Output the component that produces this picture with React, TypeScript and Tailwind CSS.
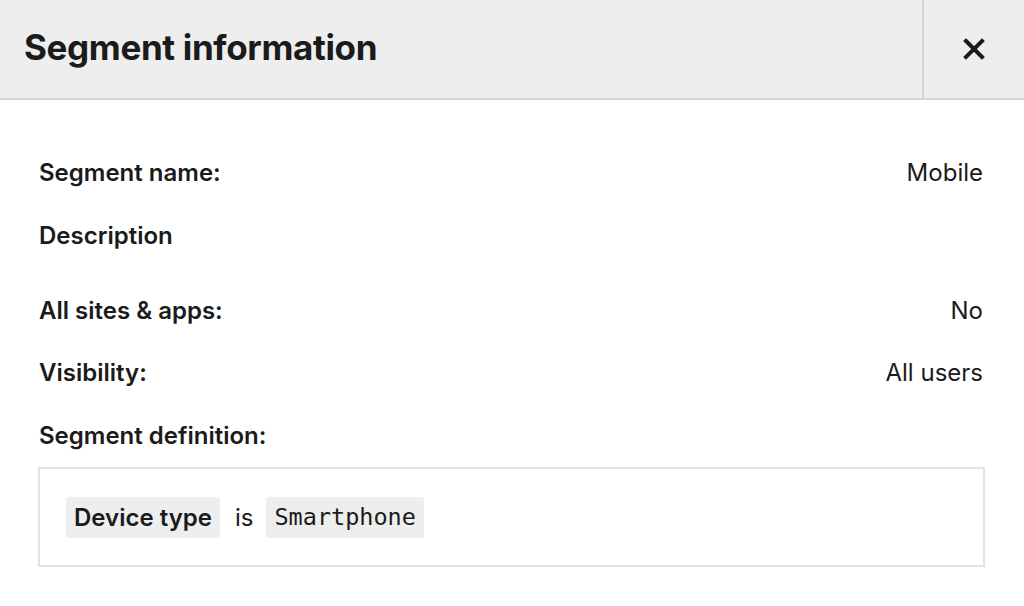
export default function App() {
  const rows: { label: string; value?: string; gap: string }[] = [
    { label: 'Segment name:', value: 'Mobile', gap: 'mt-[58px]' },
    { label: 'Description', gap: 'mt-[34px]' },
    { label: 'All sites & apps:', value: 'No', gap: 'mt-[46px]' },
    { label: 'Visibility:', value: 'All users', gap: 'mt-[33px]' },
    { label: 'Segment definition:', gap: 'mt-[34px]' },
  ];

  return (
    <div className="h-[606px] w-[1024px] bg-white text-[#1b1b1b]" style={{ fontFamily: 'Inter, "Noto Sans", sans-serif' }}>
      <div className="flex h-[100px] border-b-2 border-[#d6d6d6] bg-[#eeeeee]">
        <h2 className="flex flex-1 items-center pb-[3px] pl-6 text-[35px] font-bold tracking-[-0.35px]">Segment information</h2>
        <button className="flex w-[102px] items-center justify-center border-l-2 border-[#d6d6d6]">
          <svg width="22" height="22" viewBox="0 0 22 22" fill="none" stroke="#1b1b1b" strokeWidth="4" strokeLinecap="square">
            <path d="M3 3L19 19M19 3L3 19" />
          </svg>
        </button>
      </div>

      <div className="px-[38px]">
        {rows.map((r) => (
          <div key={r.label} className={`flex h-[29px] items-center justify-between pl-px text-[24px] leading-[29px] ${r.gap}`}>
            <span className="font-semibold">{r.label}</span>
            {r.value && <span className="mr-[3px]">{r.value}</span>}
          </div>
        ))}

        <div className="mt-[17px] flex h-[100px] w-[947px] items-center border-2 border-[#e2e2e2] px-[26px] text-[24px] leading-[29px]">
          <span className="rounded-[3px] bg-[#eeeeee] px-2 py-[6px] font-semibold">Device type</span>
          <span className="ml-[15px] mr-[13px]">is</span>
          <span className="rounded-[3px] bg-[#eeeeee] px-2 py-[6px] text-[23.5px] leading-[29px]" style={{ fontFamily: '"DejaVu Sans Mono", monospace' }}>Smartphone</span>
        </div>
      </div>
    </div>
  );
}
